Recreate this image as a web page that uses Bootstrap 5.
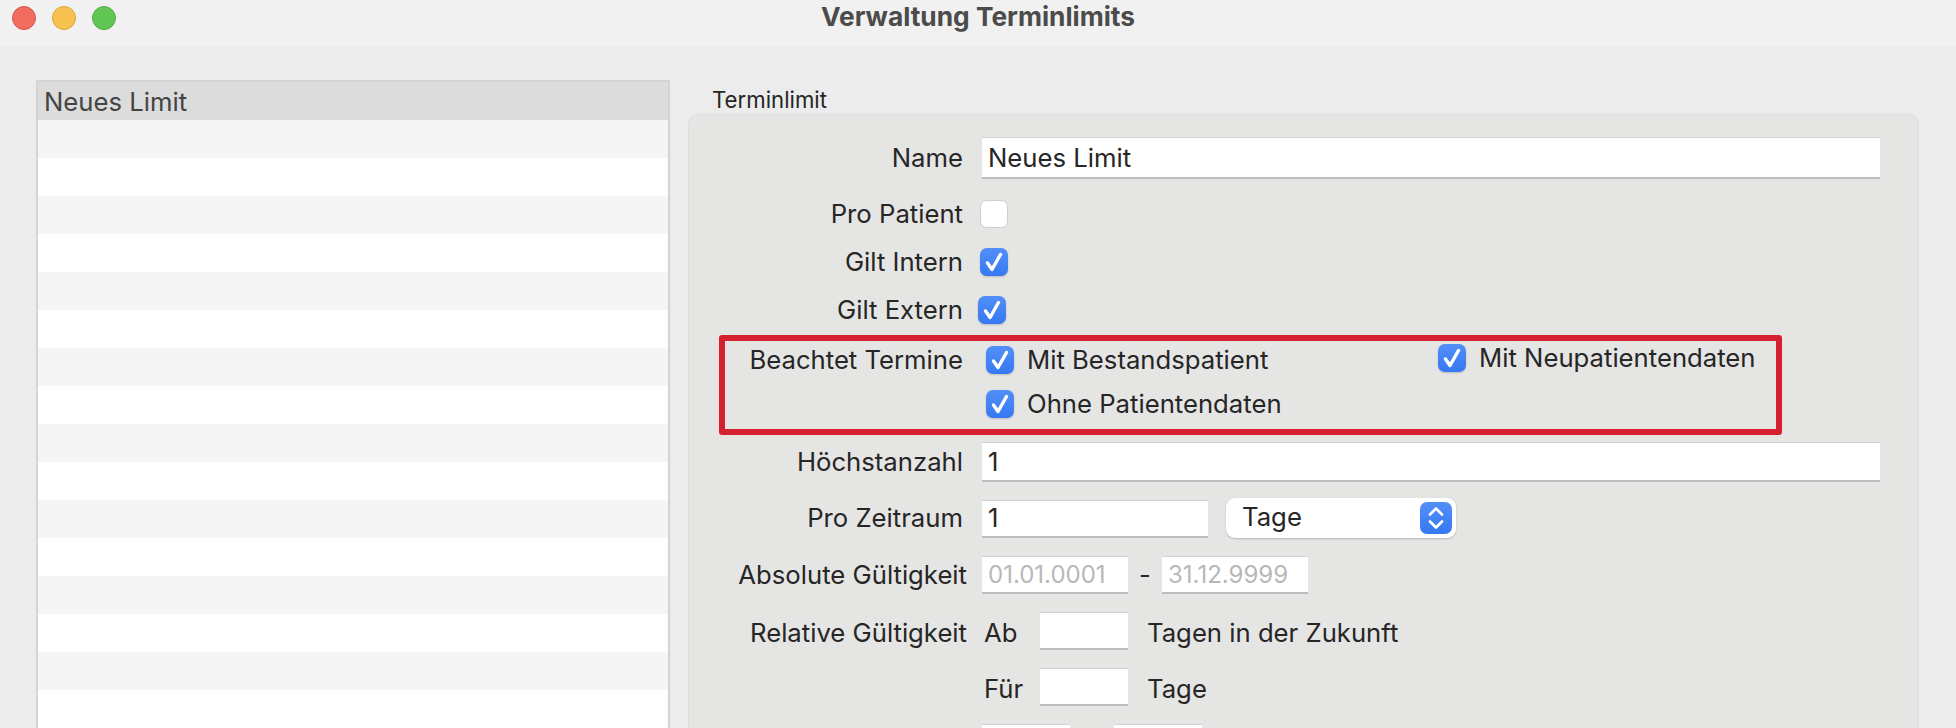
<!DOCTYPE html>
<html lang="de">
<head>
    <meta charset="UTF-8">
    <meta name="viewport" content="width=device-width, initial-scale=1.0">
    <title>Verwaltung Terminlimits</title>
    <link href="https://cdn.jsdelivr.net/npm/bootstrap@5.3.3/dist/css/bootstrap.min.css" rel="stylesheet">
    <style>
        html, body {
            height: 100%;
            overflow: hidden;
        }
        body {
            background-color: #ececec;
            font-family: Inter, "Liberation Sans", sans-serif;
            font-size: 25.7px;
            color: #262626;
        }
        /* title bar */
        .title-bar {
            display: grid;
            grid-template-columns: 1fr auto 1fr;
            align-items: center;
            height: 46px;
            padding: 0 12px 10px;
            background-color: #f1f1f1;
        }
        .light {
            width: 24px;
            height: 24px;
            border-radius: 50%;
            border: 1px solid;
        }
        .light-red { background-color: #f26d60; border-color: #d9534a; }
        .light-yellow { background-color: #f7c04f; border-color: #dca23a; }
        .light-green { background-color: #62c655; border-color: #4fac43; }
        .title-text {
            font-size: 26.3px;
            font-weight: 700;
            line-height: 32px;
            margin-top: -2px;
            color: #4b4b4b;
        }
        /* left list */
        .main-area {
            height: calc(100% - 46px);
            overflow: hidden;
            padding: 34px 0 0 36px;
            gap: 18px;
        }
        .limit-list {
            width: 634px;
            flex: none;
            border: 2px solid #d4d4d4;
            border-bottom: 0;
            border-radius: 0;
            background-color: #fff;
        }
        .limit-list .list-group-item {
            height: 38px;
            padding: 0 6px;
            border: 0;
            border-radius: 0;
            background-color: #fff;
        }
        .limit-list .list-group-item:nth-child(even) {
            background-color: #f4f5f4;
        }
        .limit-list .list-group-item.active {
            background-color: #dcdcdc;
            color: #444;
            line-height: 40px;
            margin: 0;
            font-size: 25.7px;
        }
        /* right group */
        .group-col {
            width: 1231px;
            flex: none;
            display: flex;
            flex-direction: column;
        }
        .group-title {
            height: 34px;
            flex: none;
            padding-left: 24px;
            font-size: 22.2px;
            line-height: 40px;
            color: #262626;
        }
        .group-box {
            flex: 1;
            min-height: 0;
            overflow: hidden;
            background-color: #e5e5e4;
            border: 1px solid #dedede;
            border-bottom: 0;
            border-radius: 10px 10px 0 0;
            padding-top: 22px;
        }
        .form-line {
            display: flex;
            align-items: center;
        }
        .line-label {
            width: 274px;
            flex: none;
            text-align: right;
        }
        .line-label-wide {
            width: 278px;
        }
        .line-fields {
            display: flex;
            align-items: center;
            margin-left: 19px;
        }
        .fields-check { margin-left: 17px; }
        .fields-near { margin-left: 15px; }
        .word-low { margin-top: 4px; }
        .line-name { height: 42px; margin-bottom: 21px; }
        .line-check { height: 28px; margin-bottom: 20px; }
        .line-check-last { margin-bottom: 11px; }
        .line-max { height: 40px; margin-top: 7px; margin-bottom: 16px; }
        .line-span { height: 40px; margin-bottom: 18px; }
        .line-date { height: 38px; margin-bottom: 18px; }
        .form-control.field {
            height: 100%;
            padding: 0 6px;
            border: 0;
            border-top: 1px solid #d2d2d2;
            border-bottom: 2px solid #bdbdbd;
            border-radius: 0;
            font-size: 25.7px;
            color: #262626;
            background-color: #fff;
            box-shadow: none;
        }
        .form-control.field::placeholder {
            color: #b8b8b8;
        }
        .form-control.field-date {
            font-size: 24px;
        }
        .field-full { width: 898px; }
        .form-control.field-span { width: 226px; height: 38px; margin-top: 2px; }
        .field-date { width: 146px; }
        .field-small { width: 88px; }
        .line-date .field, .line-last .field { flex: none; }
        .form-select.unit-select {
            width: 230px;
            height: 40px;
            margin-left: 18px;
            padding: 0 0 3px 16px;
            border: 0;
            border-radius: 9px;
            font-size: 25.7px;
            color: #262626;
            background-color: #fff;
            background-position: right 4px center;
            background-size: 32px 32px;
            background-image: url("data:image/svg+xml,%3csvg xmlns='http://www.w3.org/2000/svg' viewBox='0 0 32 32'%3e%3cdefs%3e%3clinearGradient id='g' x1='0' y1='0' x2='0' y2='1'%3e%3cstop offset='0' stop-color='%23528ff8'/%3e%3cstop offset='1' stop-color='%233578f3'/%3e%3c/linearGradient%3e%3c/defs%3e%3crect width='32' height='32' rx='7' fill='url(%23g)'/%3e%3cpath d='M10 12.5l6-6 6 6M10 19.5l6 6 6-6' fill='none' stroke='%23fff' stroke-width='2.6' stroke-linecap='round' stroke-linejoin='round'/%3e%3c/svg%3e");
            box-shadow: 0 1px 2px rgba(0, 0, 0, .2);
        }
        .form-check-input.tick {
            width: 28px;
            height: 28px;
            margin: 0;
            flex: none;
            border: 1px solid #cfcfcf;
            border-radius: 7px;
            background-color: #fff;
        }
        .form-check-input.tick:checked {
            border: 0;
            background-color: #3f82f7;
            background-size: 100% 100%;
            background-image: url("data:image/svg+xml,%3csvg xmlns='http://www.w3.org/2000/svg' viewBox='0 0 28 28'%3e%3cpath d='M7.5 15l4.5 6.5 8.5-15' fill='none' stroke='%23fff' stroke-width='3.4' stroke-linecap='round' stroke-linejoin='round'/%3e%3c/svg%3e"), linear-gradient(#528ff8, #3578f3);
            box-shadow: 0 1px 2px rgba(0, 0, 0, .18);
        }
        /* red marker round the group of options */
        .marked-box {
            width: 1063px;
            height: 100px;
            margin-left: 30px;
            border: 6px solid #d5202f;
            border-radius: 3px;
            display: flex;
        }
        .marked-label {
            width: 238px;
            flex: none;
            text-align: right;
        }
        .marked-options {
            display: grid;
            grid-template-columns: 452px auto;
            margin-left: 23px;
            padding-top: 5px;
            row-gap: 16px;
            align-content: start;
        }
        .option-item {
            display: flex;
            align-items: center;
            gap: 13px;
            height: 28px;
        }
        .option-raised {
            margin-top: -2px;
        }
        .date-dash { width: 34px; text-align: center; }
        .word-ab { width: 58px; padding-left: 2px; }
        .word-after { margin-left: 19px; }
        .word-gap { width: 44px; }
    </style>
</head>
<body>

    <div class="title-bar">
        <div class="d-flex gap-3">
            <span class="light light-red"></span>
            <span class="light light-yellow"></span>
            <span class="light light-green"></span>
        </div>
        <div class="title-text">Verwaltung Terminlimits</div>
        <div></div>
    </div>

    <div class="main-area d-flex">
        <!-- Limit list -->
        <ul class="limit-list list-group">
            <li class="list-group-item active">Neues Limit</li>
            <li class="list-group-item"></li><li class="list-group-item"></li>
            <li class="list-group-item"></li><li class="list-group-item"></li>
            <li class="list-group-item"></li><li class="list-group-item"></li>
            <li class="list-group-item"></li><li class="list-group-item"></li>
            <li class="list-group-item"></li><li class="list-group-item"></li>
            <li class="list-group-item"></li><li class="list-group-item"></li>
            <li class="list-group-item"></li><li class="list-group-item"></li>
            <li class="list-group-item"></li><li class="list-group-item"></li>
        </ul>

        <!-- Limit details -->
        <div class="group-col">
            <div class="group-title">Terminlimit</div>
            <div class="group-box">
                <div class="form-line line-name">
                    <div class="line-label">Name</div>
                    <div class="line-fields h-100">
                        <input class="form-control field field-full" type="text" value="Neues Limit">
                    </div>
                </div>
                <div class="form-line line-check">
                    <div class="line-label">Pro Patient</div>
                    <div class="line-fields fields-check"><input class="form-check-input tick" type="checkbox"></div>
                </div>
                <div class="form-line line-check">
                    <div class="line-label">Gilt Intern</div>
                    <div class="line-fields fields-check"><input class="form-check-input tick" type="checkbox" checked></div>
                </div>
                <div class="form-line line-check line-check-last">
                    <div class="line-label">Gilt Extern</div>
                    <div class="line-fields fields-near"><input class="form-check-input tick" type="checkbox" checked></div>
                </div>

                <div class="marked-box">
                    <div class="marked-label">Beachtet Termine</div>
                    <div class="marked-options">
                        <div class="option-item">
                            <input class="form-check-input tick" type="checkbox" checked>
                            <span>Mit Bestandspatient</span>
                        </div>
                        <div class="option-item option-raised">
                            <input class="form-check-input tick" type="checkbox" checked>
                            <span>Mit Neupatientendaten</span>
                        </div>
                        <div class="option-item">
                            <input class="form-check-input tick" type="checkbox" checked>
                            <span>Ohne Patientendaten</span>
                        </div>
                    </div>
                </div>

                <div class="form-line line-max">
                    <div class="line-label">Höchstanzahl</div>
                    <div class="line-fields h-100">
                        <input class="form-control field field-full" type="text" value="1">
                    </div>
                </div>
                <div class="form-line line-span">
                    <div class="line-label">Pro Zeitraum</div>
                    <div class="line-fields h-100">
                        <input class="form-control field field-span" type="text" value="1">
                        <select class="form-select unit-select"><option>Tage</option></select>
                    </div>
                </div>
                <div class="form-line line-date">
                    <div class="line-label line-label-wide">Absolute Gültigkeit</div>
                    <div class="line-fields fields-near h-100">
                        <input class="form-control field field-date" type="text" placeholder="01.01.0001">
                        <div class="date-dash">-</div>
                        <input class="form-control field field-date" type="text" placeholder="31.12.9999">
                    </div>
                </div>
                <div class="form-line line-date">
                    <div class="line-label line-label-wide word-low">Relative Gültigkeit</div>
                    <div class="line-fields fields-near h-100">
                        <div class="word-ab word-low">Ab</div>
                        <input class="form-control field field-small" type="text">
                        <div class="word-after word-low">Tagen in der Zukunft</div>
                    </div>
                </div>
                <div class="form-line line-date">
                    <div class="line-label line-label-wide"></div>
                    <div class="line-fields fields-near h-100">
                        <div class="word-ab word-low">Für</div>
                        <input class="form-control field field-small" type="text">
                        <div class="word-after word-low">Tage</div>
                    </div>
                </div>
                <div class="form-line line-date line-last">
                    <div class="line-label line-label-wide"></div>
                    <div class="line-fields fields-near h-100">
                        <input class="form-control field field-small" type="text">
                        <div class="word-gap"></div>
                        <input class="form-control field field-small" type="text">
                    </div>
                </div>
            </div>
        </div>
    </div>

    <script src="https://cdn.jsdelivr.net/npm/bootstrap@5.3.3/dist/js/bootstrap.bundle.min.js"></script>
</body>
</html>
